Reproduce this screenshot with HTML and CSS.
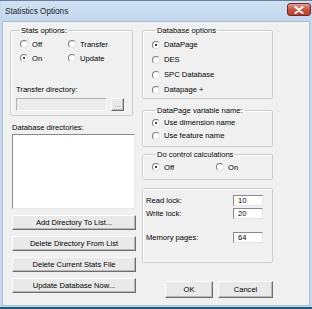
FILE: index.html
```html
<!DOCTYPE html>
<html lang="en">
<head>
    <meta charset="UTF-8">
    <title>Statistics Options</title>
    <link rel="stylesheet" href="styles.css">
</head>
<body>
    <div class="window">
        <!-- Title bar -->
        <div class="titlebar">
            <span class="title">Statistics Options</span>
            <span class="close-btn">
                <svg width="10" height="8" viewBox="0 0 10 8">
                    <path d="M1.5 1 L8.5 7 M8.5 1 L1.5 7" stroke="#fff" stroke-width="2" stroke-linecap="round"/>
                </svg>
            </span>
        </div>

        <div class="client">
            <!-- Left column -->
            <div class="col-left">
                <fieldset class="group stats-group">
                    <legend>Stats options:</legend>
                    <div class="radio-grid">
                        <label class="radio"><span class="dot"></span>Off</label>
                        <label class="radio"><span class="dot"></span>Transfer</label>
                        <label class="radio"><span class="dot checked"></span>On</label>
                        <label class="radio"><span class="dot"></span>Update</label>
                    </div>
                    <div class="field-label">Transfer directory:</div>
                    <div class="dir-row">
                        <div class="textbox disabled dir-box"></div>
                        <div class="btn browse-btn">...</div>
                    </div>
                </fieldset>

                <div class="list-label">Database directories:</div>
                <div class="listbox"></div>

                <div class="btn-stack">
                    <div class="btn wide-btn">Add Directory To List...</div>
                    <div class="btn wide-btn">Delete Directory From List</div>
                    <div class="btn wide-btn">Delete Current Stats File</div>
                    <div class="btn wide-btn">Update Database Now...</div>
                </div>
            </div>

            <!-- Right column -->
            <div class="col-right">
                <fieldset class="group db-group">
                    <legend>Database options</legend>
                    <div class="radio-list">
                        <label class="radio"><span class="dot checked"></span>DataPage</label>
                        <label class="radio"><span class="dot"></span>DES</label>
                        <label class="radio"><span class="dot"></span>SPC Database</label>
                        <label class="radio"><span class="dot"></span>Datapage +</label>
                    </div>
                </fieldset>

                <fieldset class="group var-group">
                    <legend>DataPage variable name:</legend>
                    <div class="radio-list tight">
                        <label class="radio"><span class="dot checked"></span>Use dimension name</label>
                        <label class="radio"><span class="dot"></span>Use feature name</label>
                    </div>
                </fieldset>

                <fieldset class="group calc-group">
                    <legend>Do control calculations</legend>
                    <div class="radio-row">
                        <label class="radio"><span class="dot checked"></span>Off</label>
                        <label class="radio"><span class="dot"></span>On</label>
                    </div>
                </fieldset>

                <div class="group lock-group">
                    <div class="lock-row"><span>Read lock:</span><div class="textbox lock-box">10</div></div>
                    <div class="lock-row"><span>Write lock:</span><div class="textbox lock-box">20</div></div>
                    <div class="lock-row"><span>Memory pages:</span><div class="textbox lock-box">64</div></div>
                </div>

                <div class="dialog-buttons">
                    <div class="btn ok-btn">OK</div>
                    <div class="btn cancel-btn">Cancel</div>
                </div>
            </div>
        </div>
    </div>
</body>
</html>
```

FILE: styles.css
```css
/* General */
* {
    box-sizing: border-box;
}

body {
    margin: 0;
    font-family: "Liberation Sans", Arial, sans-serif;
    font-size: 7.6px;
    color: #000;
    background: #fff;
}

.window {
    width: 312px;
    height: 309px;
    display: flex;
    flex-direction: column;
    background: #c5d8ee;
    border-top: 1px solid #6d7f96;
    border-bottom: 2px solid #1d5878;
    padding: 0 2px 1px 2px;
}

/* Title bar */
.titlebar {
    height: 20px;
    display: flex;
    align-items: center;
    justify-content: space-between;
    padding-left: 3px;
    background: linear-gradient(#d0e0f2, #c2d6ed);
    flex-shrink: 0;
}

.title {
    font-size: 8.2px;
    color: #1e1e1e;
}

.close-btn {
    width: 24px;
    height: 13px;
    margin-top: -3px;
    margin-right: -1px;
    border: 1px solid #6b2b2b;
    border-radius: 3px;
    background: linear-gradient(#e1a190, #c75545 50%, #b8412f);
    display: flex;
    align-items: center;
    justify-content: center;
}

/* Client area */
.client {
    flex: 1;
    display: flex;
    background: #f0f0f0;
    border: 1px solid #a9bdd3;
    padding: 4px 0 0 7px;
}

.col-left {
    width: 125px;
    display: flex;
    flex-direction: column;
}

.col-right {
    width: 131px;
    margin-left: 7px;
    display: flex;
    flex-direction: column;
}

/* Group boxes */
.group {
    margin: 0;
    padding: 0;
    border: 1px solid #cdcdcd;
    border-radius: 2px;
    box-shadow: inset 1px 1px 0 #fff;
}

.group legend {
    margin-left: 4px;
    padding: 0 1px;
    line-height: 9px;
    font-size: 7.6px;
}

/* Radio buttons */
.radio {
    display: flex;
    align-items: center;
    height: 14px;
    white-space: nowrap;
}

.dot {
    width: 8px;
    height: 8px;
    border-radius: 50%;
    border: 1px solid;
    border-color: #7c7c7c #e2e2e2 #e2e2e2 #7c7c7c;
    background: #fff;
    margin-right: 4px;
    position: relative;
    flex-shrink: 0;
}

.dot.checked::after {
    content: "";
    position: absolute;
    left: 2px;
    top: 2px;
    width: 2px;
    height: 2px;
    border-radius: 50%;
    background: #000;
}

/* Stats options */
.stats-group {
    width: 123px;
    height: 90px;
    padding: 0 0 0 5px;
}

.radio-grid {
    display: grid;
    grid-template-columns: 48px 1fr;
    padding: 2px 0 0 4px;
}

.field-label {
    margin-top: 20px;
    line-height: 10px;
}

.dir-row {
    display: flex;
    gap: 4px;
    margin-top: 3px;
}

.textbox {
    background: #fff;
    border: 1px solid;
    border-color: #8a8a8a #e6e6e6 #e6e6e6 #8a8a8a;
}

.textbox.disabled {
    background: #ececec;
    border-color: #b4b4b4 #fafafa #fafafa #b4b4b4;
}

.dir-box {
    width: 91px;
    height: 13px;
}

.browse-btn {
    width: 13px;
    height: 13px;
    line-height: 8px;
    color: #8a8a8a;
}

/* Buttons */
.btn {
    display: flex;
    align-items: center;
    justify-content: center;
    background: #e9e9e9;
    border: 1px solid;
    border-color: #fdfdfd #6e6e6e #6e6e6e #fdfdfd;
    box-shadow: inset -1px -1px 0 #b9b9b9;
}

/* Database directories */
.list-label {
    margin: 7px 0 0 2px;
    line-height: 10px;
}

.listbox {
    width: 123px;
    height: 75px;
    margin: 1px 0 0 2px;
    background: #fff;
    border: 1px solid;
    border-color: #8a8a8a #e8e8e8 #e8e8e8 #8a8a8a;
}

.btn-stack {
    display: flex;
    flex-direction: column;
    gap: 6px;
    margin: 6px 0 0 2px;
}

.wide-btn {
    width: 124px;
    height: 15px;
}

/* Right column groups */
.db-group {
    height: 73px;
    padding-left: 9px;
}

.radio-list {
    display: flex;
    flex-direction: column;
    padding-top: 2px;
}

.radio-list .radio {
    height: 15px;
}

.radio-list.tight {
    padding-top: 1px;
}

.radio-list.tight .radio {
    height: 13px;
}

.var-group {
    height: 41px;
    margin-top: 7px;
    padding-left: 9px;
}

.calc-group {
    height: 30px;
    margin-top: 3px;
    padding-left: 9px;
}

.radio-row {
    display: grid;
    grid-template-columns: 64px 1fr;
    padding-top: 1px;
}

.lock-group {
    height: 75px;
    margin-top: 8px;
    padding: 5px 9px 0 3px;
    box-shadow: inset 1px 1px 0 #fff;
}

.lock-row {
    display: flex;
    align-items: center;
    justify-content: space-between;
    height: 12px;
    margin-bottom: 1px;
}

.lock-row:last-child {
    margin-top: 12px;
}

.lock-box {
    width: 30px;
    height: 11px;
    line-height: 9px;
    padding-left: 4px;
}

.dialog-buttons {
    display: flex;
    justify-content: flex-end;
    gap: 5px;
    margin-top: 18px;
}

.ok-btn {
    width: 48px;
    height: 17px;
}

.cancel-btn {
    width: 55px;
    height: 17px;
}
```
